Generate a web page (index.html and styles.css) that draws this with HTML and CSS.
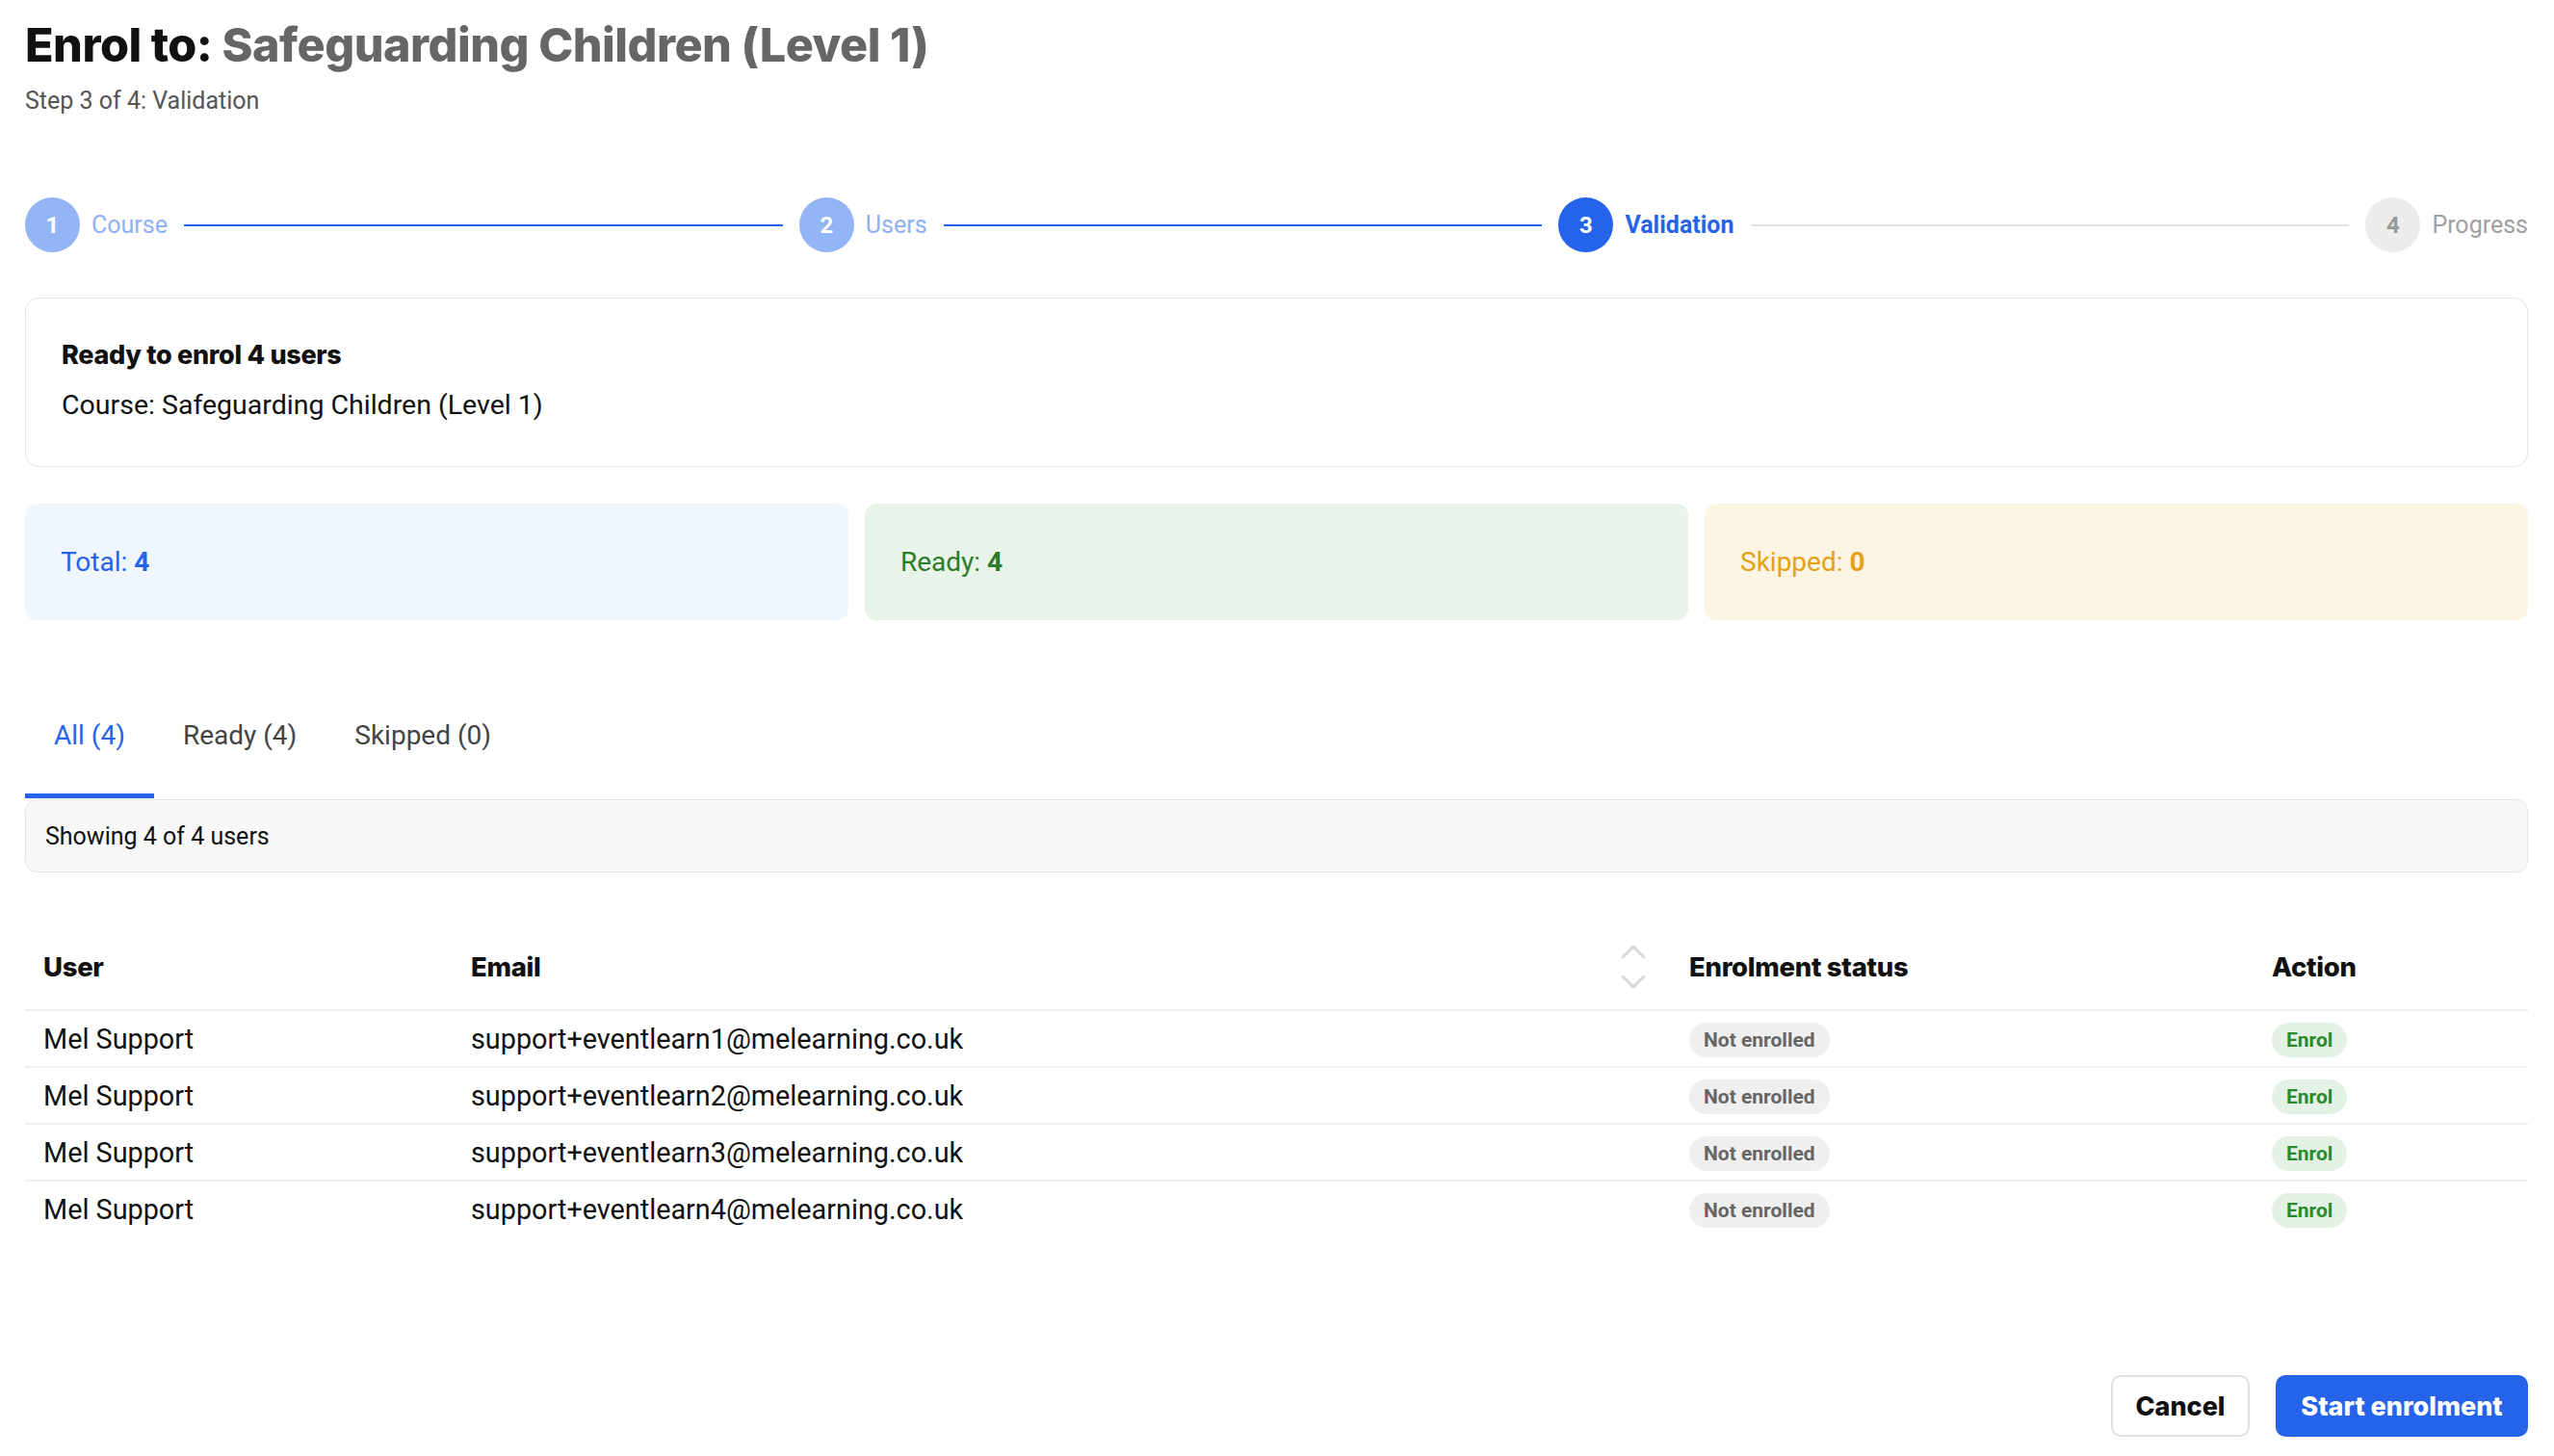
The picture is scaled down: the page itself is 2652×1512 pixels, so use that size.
FILE: index.html
```html
<!DOCTYPE html>
<html lang="en">
<head>
    <meta charset="UTF-8">
    <meta name="viewport" content="width=device-width, initial-scale=1.0">
    <title>Enrol to: Safeguarding Children (Level 1)</title>
    <link rel="stylesheet" href="styles.css">
</head>
<body>
    <div class="page">
        <h1 class="title">Enrol to: <span class="course-name">Safeguarding Children (Level 1)</span></h1>
        <div class="subtitle">Step 3 of 4: Validation</div>

        <!-- wizard steps -->
        <div class="stepper">
            <div class="step done"><span class="step-num">1</span><span class="step-label">Course</span></div>
            <div class="step-line done"></div>
            <div class="step done"><span class="step-num">2</span><span class="step-label">Users</span></div>
            <div class="step-line done"></div>
            <div class="step active"><span class="step-num">3</span><span class="step-label">Validation</span></div>
            <div class="step-line"></div>
            <div class="step"><span class="step-num">4</span><span class="step-label">Progress</span></div>
        </div>

        <div class="summary">
            <div class="summary-head">Ready to enrol 4 users</div>
            <div class="summary-course">Course: Safeguarding Children (Level 1)</div>
        </div>

        <div class="stats">
            <div class="stat stat-total">Total: <b>4</b></div>
            <div class="stat stat-ready">Ready: <b>4</b></div>
            <div class="stat stat-skipped">Skipped: <b>0</b></div>
        </div>

        <div class="tabs">
            <div class="tab active">All (4)</div>
            <div class="tab">Ready (4)</div>
            <div class="tab">Skipped (0)</div>
        </div>
        <div class="filter-bar">Showing 4 of 4 users</div>

        <table class="users">
            <thead>
                <tr>
                    <th class="col-user">User</th>
                    <th class="col-email">
                        <div class="th-sort">
                            <span>Email</span>
                            <svg class="sort-icon" width="26" height="48" viewBox="0 0 26 48" fill="none" stroke="#d9d9d9" stroke-width="3" stroke-linecap="round" stroke-linejoin="round">
                                <path d="M2 14 L13 3 L24 14"/>
                                <path d="M2 34 L13 45 L24 34"/>
                            </svg>
                        </div>
                    </th>
                    <th class="col-status">Enrolment status</th>
                    <th class="col-action">Action</th>
                </tr>
            </thead>
            <tbody>
                <tr>
                    <td>Mel Support</td>
                    <td>support+eventlearn1@melearning.co.uk</td>
                    <td><span class="pill pill-grey">Not enrolled</span></td>
                    <td><span class="pill pill-green">Enrol</span></td>
                </tr>
                <tr>
                    <td>Mel Support</td>
                    <td>support+eventlearn2@melearning.co.uk</td>
                    <td><span class="pill pill-grey">Not enrolled</span></td>
                    <td><span class="pill pill-green">Enrol</span></td>
                </tr>
                <tr>
                    <td>Mel Support</td>
                    <td>support+eventlearn3@melearning.co.uk</td>
                    <td><span class="pill pill-grey">Not enrolled</span></td>
                    <td><span class="pill pill-green">Enrol</span></td>
                </tr>
                <tr>
                    <td>Mel Support</td>
                    <td>support+eventlearn4@melearning.co.uk</td>
                    <td><span class="pill pill-grey">Not enrolled</span></td>
                    <td><span class="pill pill-green">Enrol</span></td>
                </tr>
            </tbody>
        </table>

        <div class="actions">
            <button class="btn btn-cancel">Cancel</button>
            <button class="btn btn-primary">Start enrolment</button>
        </div>
    </div>
</body>
</html>
```

FILE: styles.css
```css
body {
    margin: 0;
    background: #ffffff;
    color: #111111;
    font-family: Roboto, "Liberation Sans", sans-serif;
}

.page {
    padding: 19px 27px 0 26px;
}

.title {
    margin: 0;
    font-family: Inter, "Liberation Sans", sans-serif;
    font-weight: 800;
    font-size: 48.5px;
    line-height: 56px;
    letter-spacing: -0.5px;
    color: #111111;
}

.course-name {
    color: #666666;
}

.subtitle {
    margin-top: 15px;
    font-size: 25px;
    line-height: 30px;
    color: #555555;
}

/* stepper */
.stepper {
    display: flex;
    align-items: center;
    margin-top: 85px;
    height: 57px;
}

.step {
    display: flex;
    align-items: center;
    gap: 12px;
    color: #a0a0a0;
}

.step-num {
    width: 57px;
    height: 57px;
    border-radius: 50%;
    background: #ececec;
    color: #9a9a9a;
    display: flex;
    align-items: center;
    justify-content: center;
    font-size: 24px;
    font-weight: 700;
}

.step-label {
    font-size: 25px;
}

.step.done .step-num {
    background: #93b4f5;
    color: #ffffff;
}

.step.done .step-label {
    color: #8fb0f3;
}

.step.active .step-num {
    background: #2563eb;
    color: #ffffff;
}

.step.active .step-label {
    color: #2563eb;
    font-weight: 700;
}

.step-line {
    flex: 1;
    height: 2px;
    margin: 0 17px;
    background: #e3e3e3;
}

.step-line.done {
    background: #2563eb;
}

/* summary card */
.summary {
    margin-top: 47px;
    height: 176px;
    box-sizing: border-box;
    padding: 42px 37px 0;
    border: 1px solid #e4e4e4;
    border-radius: 14px;
}

.summary-head {
    font-family: Inter, "Liberation Sans", sans-serif;
    font-weight: 800;
    font-size: 27px;
    line-height: 34px;
    letter-spacing: -0.3px;
}

.summary-course {
    margin-top: 18px;
    font-size: 28.5px;
    line-height: 34px;
}

/* counters */
.stats {
    display: flex;
    gap: 17px;
    margin-top: 38px;
}

.stat {
    flex: 1;
    height: 121px;
    display: flex;
    align-items: center;
    padding-left: 37px;
    border-radius: 12px;
    font-size: 28px;
    white-space: pre;
}

.stat b {
    font-weight: 700;
}

.stat-total {
    background: #f0f6fe;
    color: #2563eb;
}

.stat-ready {
    background: #e8f3e9;
    color: #2b7d2b;
}

.stat-skipped {
    background: #fdf5e4;
    color: #e4a317;
}

/* tabs */
.tabs {
    display: flex;
    margin-top: 60px;
}

.tab {
    padding: 43px 30px 43px;
    font-size: 28px;
    line-height: 34px;
    color: #444444;
    border-bottom: 5px solid transparent;
}

.tab.active {
    color: #2563eb;
    border-bottom-color: #2563eb;
}

.filter-bar {
    height: 76px;
    box-sizing: border-box;
    display: flex;
    align-items: center;
    padding-left: 20px;
    margin-top: 1px;
    background: #f8f8f8;
    border: 1px solid #e6e6e6;
    border-radius: 12px;
    font-size: 25px;
}

/* users table */
.users {
    width: 100%;
    margin-top: 54px;
    border-collapse: collapse;
}

.users th {
    text-align: left;
    height: 88px;
    padding: 0 19px;
    font-family: Inter, "Liberation Sans", sans-serif;
    font-weight: 800;
    font-size: 27.5px;
    letter-spacing: -0.3px;
    border-bottom: 2px solid #eeeeee;
}

.users td {
    height: 57px;
    padding: 0 19px;
    font-size: 28.8px;
    border-bottom: 2px solid #f0f0f0;
}

.users tbody tr:last-child td {
    border-bottom: none;
}

.col-user { width: 406px; }
.col-email { width: 1227px; }
.col-status { width: 567px; }

.th-sort {
    display: flex;
    align-items: center;
    justify-content: space-between;
}

.sort-icon {
    margin-right: 7px;
}

.pill {
    display: inline-block;
    padding: 0 15px;
    height: 36px;
    line-height: 36px;
    border-radius: 18px;
    font-size: 21px;
    font-weight: 700;
}

.pill-grey {
    background: #efefef;
    color: #666666;
}

.pill-green {
    background: #e4f2e5;
    color: #2b8a2b;
}

/* footer buttons */
.actions {
    display: flex;
    justify-content: flex-end;
    gap: 27px;
    margin-top: 144px;
}

.btn {
    height: 64px;
    padding: 0;
    border-radius: 10px;
    font-family: Inter, "Liberation Sans", sans-serif;
    font-weight: 800;
    font-size: 27px;
    white-space: nowrap;
    cursor: pointer;
}

.btn-cancel {
    background: #ffffff;
    color: #111111;
    border: 2px solid #e0e0e0;
    width: 144px;
}

.btn-primary {
    background: #2563eb;
    color: #ffffff;
    border: none;
    width: 262px;
}
```
